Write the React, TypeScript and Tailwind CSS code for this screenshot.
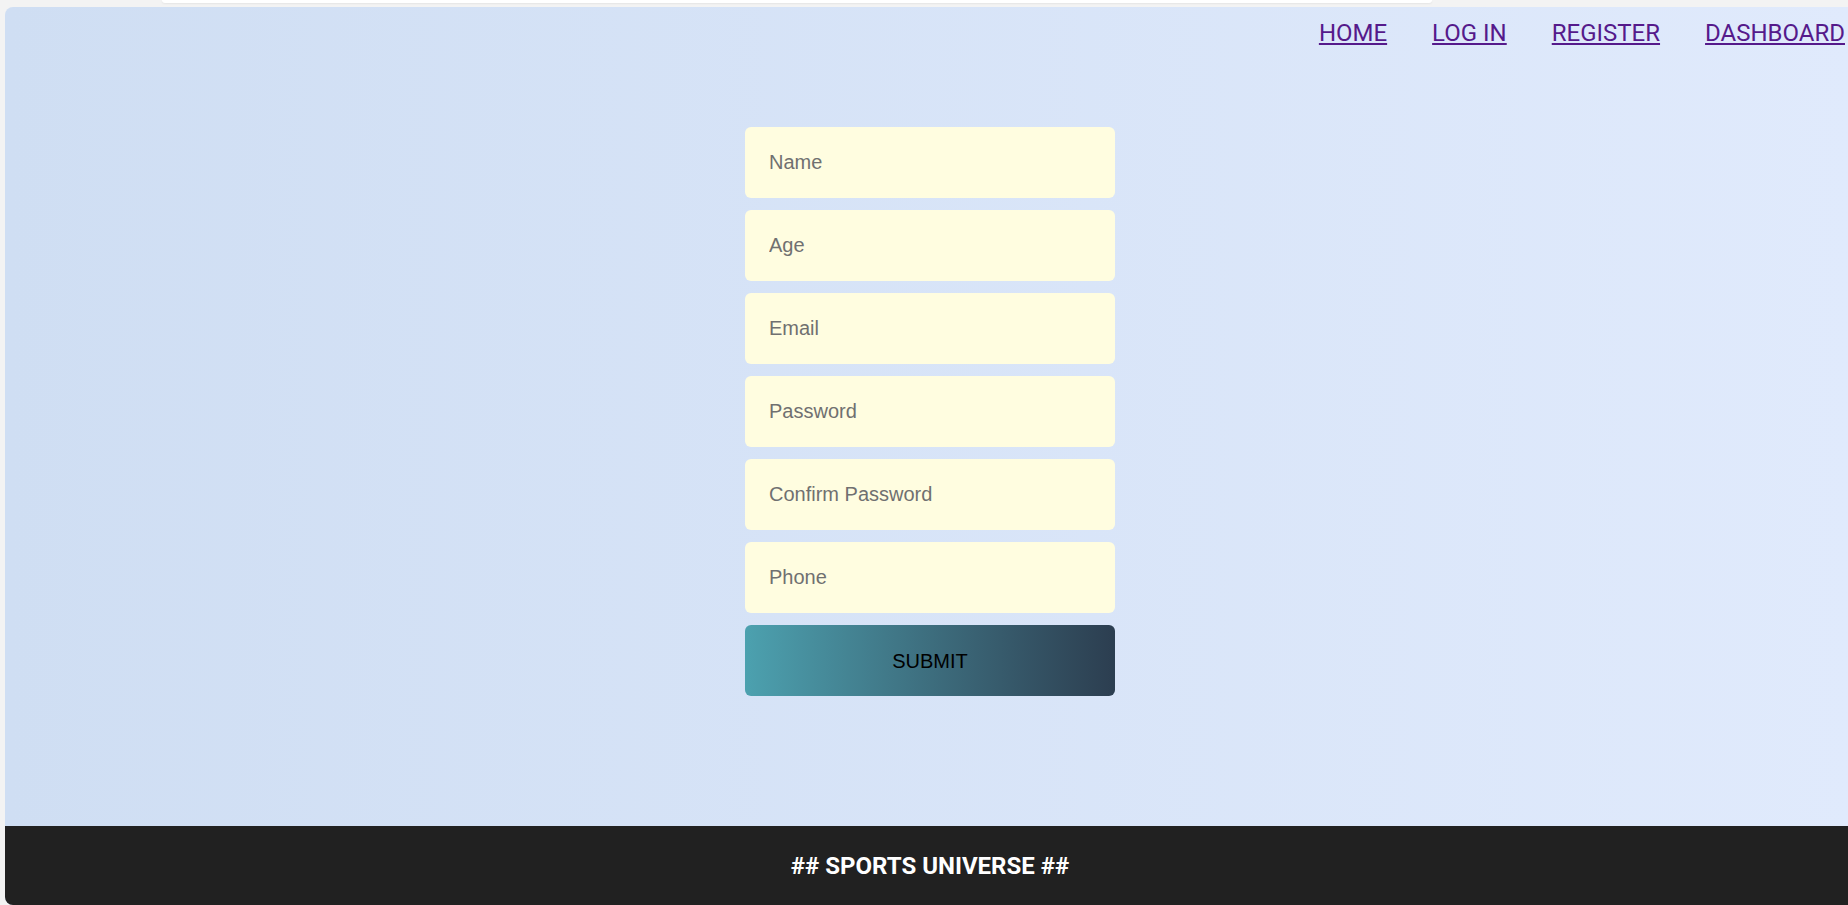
import React from 'react';

const fields = ['Name', 'Age', 'Email', 'Password', 'Confirm Password', 'Phone'];
const links = ['HOME', 'LOG IN', 'REGISTER', 'DASHBOARD'];

export default function App() {
  return (
    <div className="h-[905px] w-full overflow-hidden bg-[#f3f3f3] flex flex-col">
      {/* browser chrome strip */}
      <div className="h-[7px] shrink-0">
        <div className="ml-[162px] w-[1270px] h-[3px] bg-white rounded-b-[10px] shadow-[0_1px_2px_rgba(0,0,0,0.06)]" />
      </div>

      <div className="flex-1 ml-[5px] rounded-l-[8px] overflow-hidden flex flex-col bg-linear-to-r from-[#cfdef3] to-[#e0eafc]">
        {/* Nav */}
        <nav className="flex justify-end gap-[45px] pt-[8px] pr-[3px] font-['Roboto',sans-serif]">
          {links.map((l) => (
            <a
              key={l}
              href="#"
              className="text-[24px] leading-normal text-[#551a8b] underline whitespace-nowrap"
            >
              {l}
            </a>
          ))}
        </nav>

        {/* Form */}
        <main className="flex-1 flex justify-center pl-[7px]">
          <form
            className="mt-[76px] w-[370px] flex flex-col gap-[12px] font-['Liberation_Sans',Arial,sans-serif]"
            onSubmit={(e) => e.preventDefault()}
          >
            {fields.map((f) => (
              <input
                key={f}
                type="text"
                placeholder={f}
                className="h-[71px] w-full rounded-[6px] bg-[#fffde0] pl-[24px] text-[20px] text-[#333] placeholder:text-[#707070] outline-none"
              />
            ))}
            <button
              type="submit"
              className="h-[71px] w-full rounded-[6px] bg-linear-to-r from-[#4ca1af] to-[#2c3e50] text-[20px] text-black"
            >
              SUBMIT
            </button>
          </form>
        </main>

        {/* Footer */}
        <footer className="h-[79px] shrink-0 bg-[#212121] flex items-center justify-center pl-[7px]">
          <h3 className="text-white text-[24px] font-bold font-['Roboto',sans-serif]">
            ## SPORTS UNIVERSE ##
          </h3>
        </footer>
      </div>
    </div>
  );
}
